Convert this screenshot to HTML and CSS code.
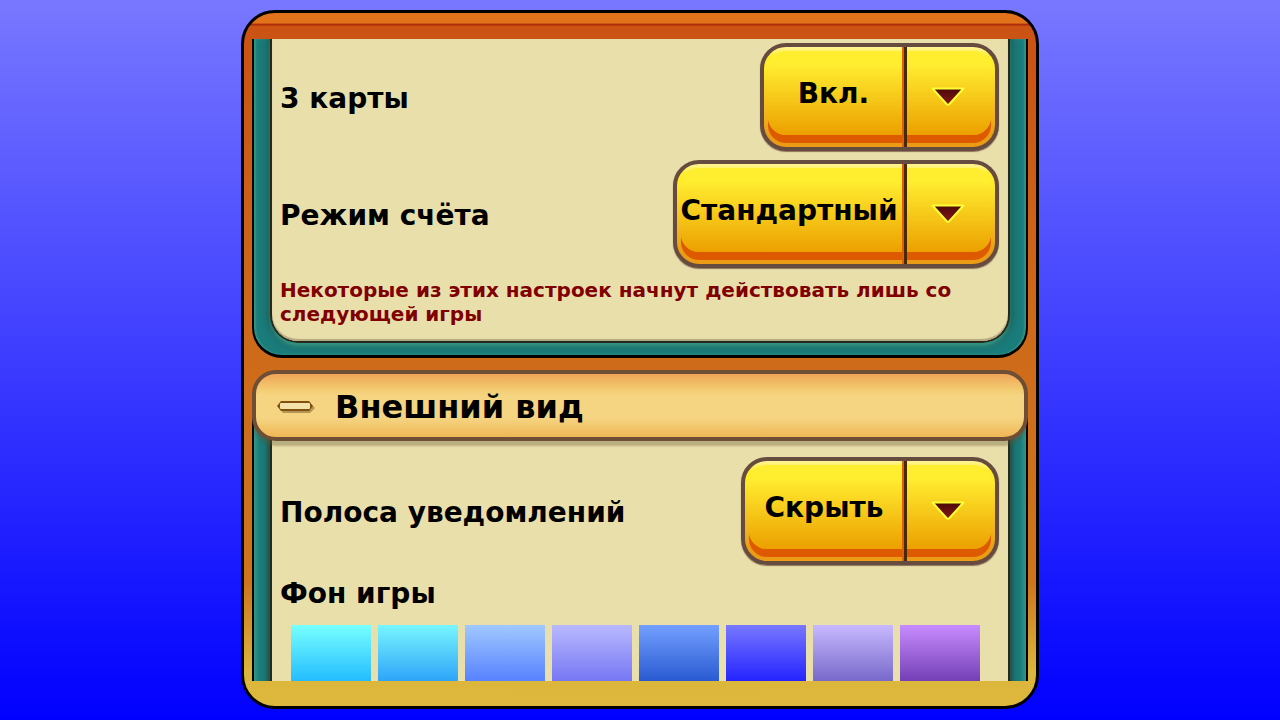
FILE: index.html
```html
<!DOCTYPE html>
<html lang="ru">
<head>
<meta charset="utf-8">
<meta name="viewport" content="width=device-width, initial-scale=1">
<title>Настройки</title>
<link rel="stylesheet" href="styles.css">
</head>
<body>
<main class="dialog">
  <div class="scroller">
    <section class="card card-first">
      <div class="panel">
        <div class="row">
          <label class="row-label" for="cards">3 карты</label>
          <span class="picker picker-small">
            <select id="cards"><option>Вкл.</option></select>
            <svg class="arrow" viewBox="0 0 34 20" aria-hidden="true"><defs><linearGradient id="arrow-fill" x2="0" y2="1"><stop stop-color="#4c0909"/><stop offset="1" stop-color="#861818"/></linearGradient></defs><path d="M1.500 1.500H32.500L18.500 17Q17 18.500 15.500 17Z" fill="url(#arrow-fill)" stroke="#ffff35" stroke-width="2" stroke-linejoin="round"/></svg>
          </span>
        </div>
        <div class="row">
          <label class="row-label" for="score">Режим счёта</label>
          <span class="picker picker-large">
            <select id="score"><option>Стандартный</option></select>
            <svg class="arrow" viewBox="0 0 34 20" aria-hidden="true"><path d="M1.500 1.500H32.500L18.500 17Q17 18.500 15.500 17Z" fill="url(#arrow-fill)" stroke="#ffff35" stroke-width="2" stroke-linejoin="round"/></svg>
          </span>
        </div>
        <p class="note">Некоторые из этих настроек начнут действовать лишь со следующей игры</p>
      </div>
    </section>

    <button class="section-head" type="button" aria-expanded="true">
      <svg class="minus" viewBox="0 0 40 16" aria-hidden="true"><path d="M3 10L7 5H34L39 10L34 15H7Z" fill="#8a6a38" opacity=".6"/><path d="M1 8L5 3H33L37 8L33 13H5Z" fill="#80500c"/><rect x="4" y="5" width="30" height="6" rx="1" fill="#f4e2a8"/></svg>
      <span>Внешний вид</span>
    </button>

    <section class="card card-look">
      <div class="panel">
        <div class="row">
          <label class="row-label" for="bar">Полоса уведомлений</label>
          <span class="picker picker-medium">
            <select id="bar"><option>Скрыть</option></select>
            <svg class="arrow" viewBox="0 0 34 20" aria-hidden="true"><path d="M1.500 1.500H32.500L18.500 17Q17 18.500 15.500 17Z" fill="url(#arrow-fill)" stroke="#ffff35" stroke-width="2" stroke-linejoin="round"/></svg>
          </span>
        </div>
        <h2 class="subhead">Фон игры</h2>
        <div class="swatches">
          <button type="button" class="swatch aqua" aria-label="Бирюзовый"></button>
          <button type="button" class="swatch sky" aria-label="Небесный"></button>
          <button type="button" class="swatch azure" aria-label="Лазурный"></button>
          <button type="button" class="swatch lavender" aria-label="Лавандовый"></button>
          <button type="button" class="swatch royal" aria-label="Тёмно-синий"></button>
          <button type="button" class="swatch blue" aria-label="Синий"></button>
          <button type="button" class="swatch mauve" aria-label="Сиреневый"></button>
          <button type="button" class="swatch purple" aria-label="Фиолетовый"></button>
        </div>
      </div>
    </section>
  </div>
</main>
</body>
</html>
```

FILE: styles.css
```css
* { box-sizing: border-box; }

body {
  margin: 0;
  height: 100vh;
  padding: 10px 16px 11px;
  display: flex;
  justify-content: center;
  overflow: hidden;
  background: linear-gradient(#7878ff, #0000ff);
  font-family: "DejaVu Sans", sans-serif;
  font-weight: bold;
  color: #000;
}

.dialog {
  width: 100%;
  max-width: 798px;
  display: flex;
  padding: 26px 8px 25px;
  border: 3px solid #000;
  border-radius: 34px;
  background:
    linear-gradient(#e2731b 0, #e2731b 10px, #b83a0c 11px, #a92508 12px, transparent 13px),
    linear-gradient(#cb5314, #cb5314 5%, #ce6a1a 45%, #ce741c 82%, #dbb63c 95%, #ddb83c);
}

.scroller {
  flex: 1;
  min-width: 0;
  overflow: hidden;
}

.card {
  padding: 0 18px;
  border: solid #000;
  border-width: 0 2px;
  background: linear-gradient(90deg, #329684, #1a7c7b 6px, #1a7c7b 11px, #205955 18px, #205955 calc(100% - 18px), #1a7c7b calc(100% - 11px), #1a7c7b calc(100% - 6px), #329684);
}

.card-first {
  padding-bottom: 14px;
  border-bottom-width: 3px;
  border-radius: 0 0 30px 30px;
  background: #1a7c7b;
  box-shadow: inset 2px 0 2px #329684, inset -2px 0 2px #329684;
}

.panel {
  padding: 4px 9px 0 8px;
  background: #e9dfab;
  box-shadow: 0 0 0 2px #27291c, 0 0 8px 3px #244b40;
}

.card-first .panel {
  padding-bottom: 15px;
  border-radius: 0 0 26px 26px;
  box-shadow: inset 0 -2px 1px #b2a880, 0 0 0 2px #27291c, 0 4px 4px 1px #369b88, 0 0 8px 3px #244b40;
}

.row {
  display: flex;
  align-items: center;
  justify-content: space-between;
  gap: 16px;
  margin-bottom: 9px;
}

.row-label {
  padding-top: 4px;
  font-size: 28px;
  line-height: 32px;
}

.picker {
  position: relative;
  height: 108px;
  padding: 4px;
  border: 4px solid #664c3e;
  border-radius: 26px;
  background: linear-gradient(#fff49a, #ffed28 10px, #ffed28 18px, #eb9c14 88px);
  box-shadow: 0 1px 1px #8d705b;
}

.picker::before {
  content: "";
  position: absolute;
  inset: 4px 4px 12px;
  border-radius: 18px;
  background: linear-gradient(#ffed30, #ffed30 16%, #eca000);
  box-shadow: 0 8px #de5a00;
}

.picker::after {
  content: "";
  position: absolute;
  top: 0;
  bottom: 0;
  right: 88px;
  width: 5px;
  background: linear-gradient(90deg, #e26005 2px, #452a0b 2px);
  pointer-events: none;
}

.picker-small { width: 239px; }
.picker-medium { width: 258px; }
.picker-large { width: 326px; }

.picker select {
  position: relative;
  appearance: none;
  display: block;
  width: 100%;
  height: 92px;
  margin: 0;
  padding: 0 92px 7px 0;
  border: 0;
  background: none;
  color: #000;
  font: bold 28px "DejaVu Sans", sans-serif;
  text-align: center;
  text-align-last: center;
}

.picker-large { padding: 4px 4px 4px 2px; }

.arrow {
  position: absolute;
  top: 40px;
  right: 30px;
  width: 34px;
  height: 20px;
  pointer-events: none;
}

.note {
  margin: 0;
  padding-top: 1px;
  color: #800000;
  font-size: 20px;
  line-height: 24px;
}

.section-head {
  position: relative;
  display: flex;
  align-items: center;
  gap: 19px;
  width: 100%;
  height: 71px;
  margin: 12px 0 0;
  padding: 0 20px;
  border: 4px solid #6e4e34;
  border-radius: 24px;
  background: linear-gradient(#f0a458, #f3cb70 15px, #f5d482 22px, #f5d482 44px, #f0b754);
  box-shadow: 0 6px 2px -1px rgba(100, 85, 50, 0.35);
  color: #000;
  font: bold 32px "DejaVu Sans", sans-serif;
}

.section-head span { padding-top: 2px; }

.minus { width: 40px; height: 16px; }

.card-look { margin-top: -24px; }

.card-look .panel { padding-top: 40px; }

.subhead {
  margin: 0;
  padding-top: 4px;
  font-size: 28px;
  line-height: 32px;
}

.swatches {
  display: flex;
  flex-wrap: wrap;
  gap: 7px;
  padding: 15px 10px 0 11px;
}

.swatch {
  width: 80px;
  height: 80px;
  border: 0;
  padding: 0;
}

.aqua { background: linear-gradient(#78ffff, #00a0ff); }
.sky { background: linear-gradient(#78f5ff, #0f82f5); }
.azure { background: linear-gradient(#a0c8ff, #3764ff); }
.lavender { background: linear-gradient(#b9b9ff, #5a5af0); }
.royal { background: linear-gradient(#73a0ff, #0a3cbe); }
.blue { background: linear-gradient(#7878ff, #0000ff); }
.mauve { background: linear-gradient(#c8b9ff, #5546b4); }
.purple { background: linear-gradient(#c88cff, #501e96); }
```
